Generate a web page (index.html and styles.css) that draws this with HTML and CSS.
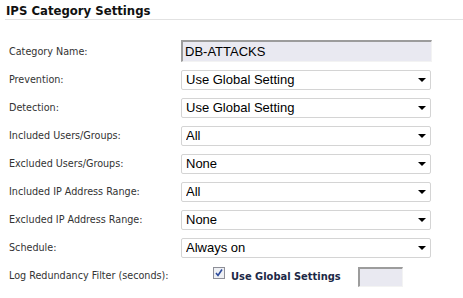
FILE: index.html
```html
<!DOCTYPE html>
<html lang="en">
<head>
    <meta charset="UTF-8">
    <title>IPS Category Settings</title>
    <link rel="stylesheet" href="styles.css">
</head>
<body>

    <div class="panel">
        <h2 class="panel-title">IPS Category Settings</h2>

        <div class="form">
            <div class="row">
                <label>Category Name:</label>
                <input type="text" class="readonly" value="DB-ATTACKS" readonly>
            </div>
            <div class="row">
                <label>Prevention:</label>
                <span class="select"><select><option>Use Global Setting</option></select><i class="arrow"></i></span>
            </div>
            <div class="row">
                <label>Detection:</label>
                <span class="select"><select><option>Use Global Setting</option></select><i class="arrow"></i></span>
            </div>
            <div class="row">
                <label>Included Users/Groups:</label>
                <span class="select"><select><option>All</option></select><i class="arrow"></i></span>
            </div>
            <div class="row">
                <label>Excluded Users/Groups:</label>
                <span class="select"><select><option>None</option></select><i class="arrow"></i></span>
            </div>
            <div class="row">
                <label>Included IP Address Range:</label>
                <span class="select"><select><option>All</option></select><i class="arrow"></i></span>
            </div>
            <div class="row">
                <label>Excluded IP Address Range:</label>
                <span class="select"><select><option>None</option></select><i class="arrow"></i></span>
            </div>
            <div class="row">
                <label>Schedule:</label>
                <span class="select"><select><option>Always on</option></select><i class="arrow"></i></span>
            </div>
            <div class="row">
                <label>Log Redundancy Filter (seconds):</label>
                <div class="global">
                    <svg class="check" width="12" height="12" viewBox="0 0 12 12">
                        <rect x="0.5" y="0.5" width="11" height="11" fill="#eef0f4" stroke="#8e8f98"/>
                        <path d="M3 6 L5 8.5 L9 2.5" fill="none" stroke="#2c4a9c" stroke-width="1.6"/>
                    </svg>
                    <span class="global-label">Use Global Settings</span>
                    <input type="text" class="readonly small" readonly>
                </div>
            </div>
        </div>
    </div>

</body>
</html>
```

FILE: styles.css
```css
* {
    margin: 0;
    padding: 0;
    box-sizing: border-box;
}

body {
    font-family: 'DejaVu Sans Condensed', 'DejaVu Sans', sans-serif;
    background-color: #fff;
    color: #333;
}

.panel-title {
    font-size: 13px;
    line-height: 15px;
    font-weight: bold;
    color: #111;
    padding: 3px 0 1px 1px;
    margin-left: 5px;
    border-bottom: 1px solid #e2e2e2;
}

.form {
    margin-top: 17px;
    padding-left: 9px;
}

.row {
    display: flex;
    align-items: center;
    height: 28px;
}

.row label {
    width: 172px;
    font-size: 10.7px;
    color: #333;
}

input.readonly {
    width: 251px;
    height: 22px;
    font-family: 'Liberation Sans', Arial, sans-serif;
    font-size: 13px;
    color: #000;
    background-color: #e9e9f1;
    border: 1px solid #f3f3f3;
    border-top: 2px solid #9c9c9c;
    border-left: 2px solid #9c9c9c;
    padding-left: 2px;
    outline: none;
}

input.small {
    width: 45px;
    height: 20px;
}

.select {
    position: relative;
    display: block;
    width: 250px;
    height: 20px;
}

.select select {
    appearance: none;
    -webkit-appearance: none;
    width: 100%;
    height: 100%;
    font-family: 'Liberation Sans', Arial, sans-serif;
    font-size: 13px;
    color: #000;
    background: #fff;
    border: 1px solid #d4d4d4;
    border-radius: 2px;
    padding-left: 4px;
    outline: none;
}

.arrow {
    position: absolute;
    top: 9px;
    right: 5px;
    width: 0;
    height: 0;
    border-left: 4px solid transparent;
    border-right: 4px solid transparent;
    border-top: 4px solid #000;
    pointer-events: none;
}

.global {
    display: flex;
    align-items: center;
    padding-left: 32px;
    margin-top: 3px;
}

.check {
    display: block;
    margin-top: -7px;
}

.global-label {
    font-size: 11px;
    font-weight: bold;
    color: #1c2846;
    margin-left: 6px;
    width: 127px;
}
```
